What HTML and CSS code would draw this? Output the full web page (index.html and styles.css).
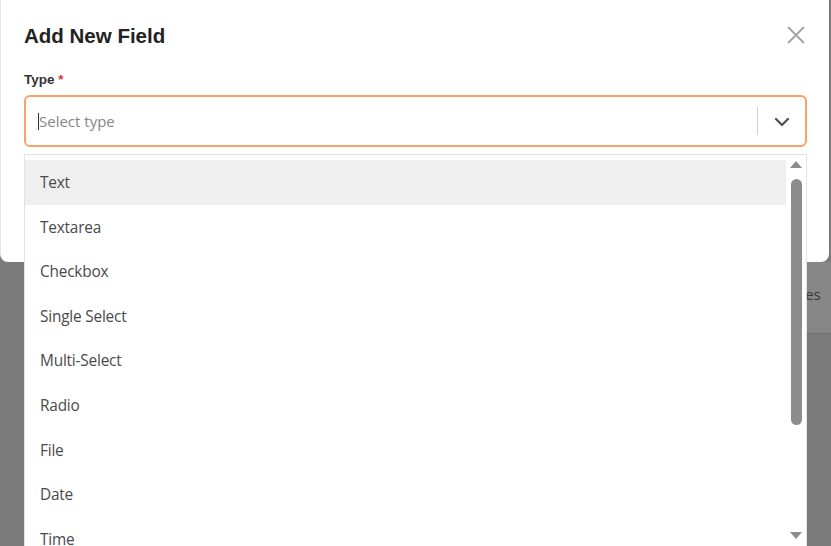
FILE: index.html
```html
<!DOCTYPE html>
<html>
<head>
<meta charset="utf-8">
<link rel="stylesheet" href="styles.css">
</head>
<body>
<div class="page-behind">
  <div class="behind-card"><span class="behind-text">Fees</span></div>
</div>
<div class="modal">
  <div class="modal-head">
    <h2 class="modal-title">Add New Field</h2>
    <button class="close-btn" aria-label="Close">
      <svg width="20" height="20" viewBox="0 0 20 20"><path d="M2 2 L18 18 M18 2 L2 18" stroke="#a3a3a3" stroke-width="1.8" fill="none"/></svg>
    </button>
  </div>
  <label class="field-label">Type <span class="req">*</span></label>
  <div class="select">
    <div class="select-value"><span class="caret"></span><span class="placeholder">Select type</span></div>
    <div class="select-indicators">
      <span class="sep"></span>
      <svg class="chev" width="16" height="10" viewBox="0 0 16 10"><path d="M2 2 L8 8 L14 2" stroke="#555" stroke-width="2.4" fill="none" stroke-linecap="round" stroke-linejoin="round"/></svg>
    </div>
  </div>
</div>
<div class="menu">
  <ul class="menu-list">
    <li class="opt active">Text</li>
    <li class="opt">Textarea</li>
    <li class="opt">Checkbox</li>
    <li class="opt">Single Select</li>
    <li class="opt">Multi-Select</li>
    <li class="opt">Radio</li>
    <li class="opt">File</li>
    <li class="opt">Date</li>
    <li class="opt">Time</li>
  </ul>
  <div class="scrollbar">
    <span class="arrow up"></span>
    <span class="thumb"></span>
    <span class="arrow down"></span>
  </div>
</div>
</body>
</html>
```
FILE: styles.css
```css
html, body {
  margin: 0;
  padding: 0;
  width: 831px;
  height: 546px;
  overflow: hidden;
  background: #7b7b7b;
  font-family: "Liberation Sans", Arial, sans-serif;
}
.page-behind {
  position: absolute;
  left: 0;
  top: 0;
  width: 831px;
  height: 546px;
}
.behind-card {
  position: absolute;
  left: 770px;
  top: 262px;
  width: 80px;
  height: 71px;
  background: #878787;
  border-bottom: 1px solid #6f6f6f;
  display: flex;
  align-items: center;
}
.behind-text {
  font-family: "Open Sans", sans-serif;
  font-size: 15px;
  color: #3a3a3a;
  padding-left: 19px;
  margin-top: -8px;
}
.modal {
  position: relative;
  width: 829px;
  height: 262px;
  box-sizing: border-box;
  background: #fff;
  border-left: 1px solid #e6e6e6;
  border-radius: 0 0 8px 8px;
  padding: 24px 23px 0 23px;
}
.modal-head {
  display: flex;
  justify-content: space-between;
  align-items: flex-start;
  height: 46px;
}
.modal-title {
  margin: 0;
  font-size: 20.5px;
  font-weight: 700;
  color: #222;
  line-height: 24px;
}
.close-btn {
  border: 0;
  background: none;
  padding: 0;
  margin: 1px 0 0 0;
  width: 20px;
  height: 20px;
  cursor: pointer;
}
.field-label {
  display: block;
  font-size: 13.5px;
  font-weight: 700;
  color: #333;
  line-height: 18px;
  margin-top: 1px;
}
.req {
  color: #e0363c;
}
.select {
  margin-top: 6px;
  width: 783px;
  height: 52px;
  box-sizing: border-box;
  border: 2px solid #f7a268;
  border-radius: 6px;
  display: flex;
  align-items: center;
}
.select-value {
  flex: 1;
  display: flex;
  align-items: center;
  padding-left: 12px;
}
.caret {
  width: 1px;
  height: 17px;
  background: #333;
}
.placeholder {
  font-family: "Open Sans", sans-serif;
  font-size: 15px;
  color: #868686;
  margin-top: -1px;
}
.select-indicators {
  display: flex;
  align-items: center;
  height: 100%;
}
.sep {
  width: 1px;
  height: 28px;
  background: #cfcfcf;
}
.chev {
  margin: 2px 15px 0 16px;
}
.menu {
  position: absolute;
  left: 24px;
  top: 154px;
  width: 783px;
  height: 400px;
  box-sizing: border-box;
  background: #fff;
  border: 1px solid #e2e2e2;
  display: flex;
}
.menu-list {
  list-style: none;
  margin: 0;
  padding: 5px 0 0 0;
  flex: 1;
}
.opt {
  height: 44.6px;
  line-height: 46px;
  padding-left: 15px;
  font-family: "Open Sans", sans-serif;
  font-size: 15.4px;
  color: #4a4a4a;
  letter-spacing: -0.2px;
}
.opt.active {
  background: #efefef;
}
.scrollbar {
  width: 20px;
  display: flex;
  flex-direction: column;
  align-items: center;
  padding-top: 6px;
}
.arrow {
  width: 0;
  height: 0;
  border-left: 6px solid transparent;
  border-right: 6px solid transparent;
}
.arrow.up {
  border-bottom: 7px solid #8c8c8c;
}
.arrow.down {
  border-top: 7px solid #8c8c8c;
  margin-top: 107px;
}
.thumb {
  width: 11px;
  height: 246px;
  margin-top: 11px;
  background: #8c8c8c;
  border-radius: 6px;
}
```
